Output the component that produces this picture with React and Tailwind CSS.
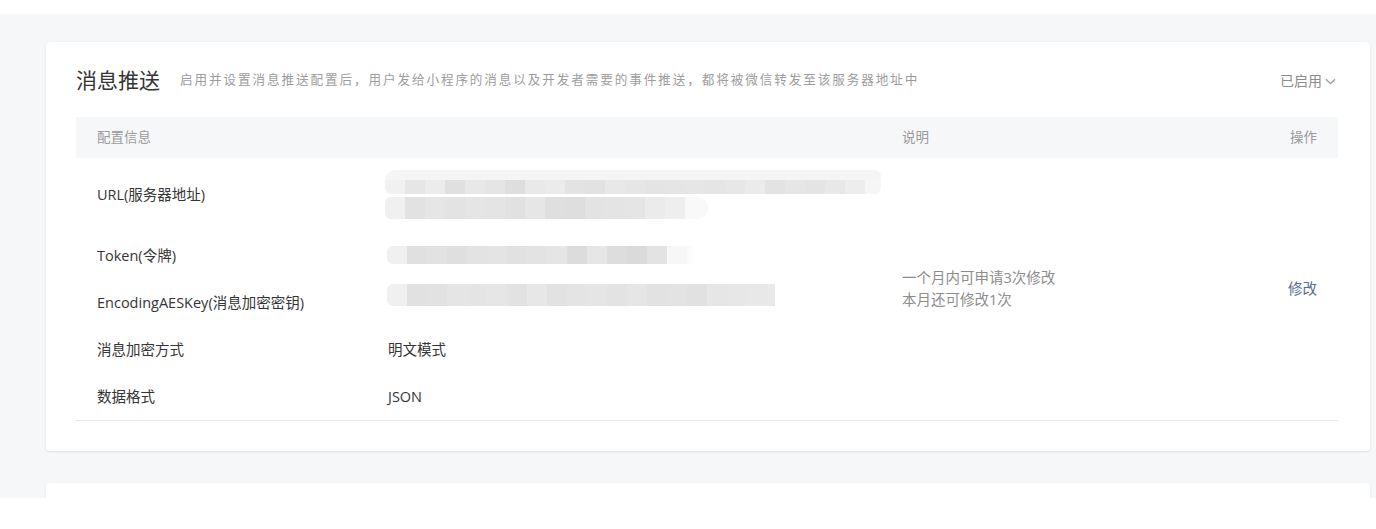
import React from "react";

const FONT = { fontFamily: '"Open Sans", "Noto Sans CJK SC", sans-serif' };

function Cells({ cells }) {
  return cells.map((c, i) => <div key={i} className={`w-[20px] h-full ${c}`} />);
}

const l1 = [
  "bg-[#e6e6e6]", "bg-[#ececec]", "bg-[#e0e0e0]", "bg-[#e8e8e8]", "bg-[#e5e5e5]", "bg-[#dedede]",
  "bg-[#e9e9e9]", "bg-[#ebebeb]", "bg-[#e3e3e3]", "bg-[#e2e2e2]", "bg-[#e8e8e8]", "bg-[#e6e6e6]",
  "bg-[#e4e4e4]", "bg-[#e5e5e5]", "bg-[#e6e6e6]", "bg-[#e5e5e5]", "bg-[#e7e7e7]", "bg-[#ebebeb]",
  "bg-[#e3e3e3]", "bg-[#e6e6e6]", "bg-[#e4e4e4]", "bg-[#e8e8e8]", "bg-[#ededed]",
];
const l2 = [
  "bg-[#e2e2e2]", "bg-[#e6e6e6]", "bg-[#e3e3e3]", "bg-[#e5e5e5]", "bg-[#e4e4e4]", "bg-[#e1e1e1]",
  "bg-[#e6e6e6]", "bg-[#dfdfdf]", "bg-[#dedede]", "bg-[#e3e3e3]", "bg-[#e4e4e4]", "bg-[#e5e5e5]",
  "bg-[#ebebeb]", "bg-[#eeeeee]",
];
const tk = [
  "bg-[#e0e0e0]", "bg-[#e2e2e2]", "bg-[#dfdfdf]", "bg-[#e3e3e3]", "bg-[#e4e4e4]", "bg-[#e1e1e1]",
  "bg-[#e3e3e3]", "bg-[#e5e5e5]", "bg-[#dcdcdc]", "bg-[#e6e6e6]", "bg-[#dddddd]", "bg-[#dadada]",
  "bg-[#e3e3e3]", "bg-[#f7f7f7]",
];
const ak = [
  "bg-[#e1e1e1]", "bg-[#e2e2e2]", "bg-[#e5e5e5]", "bg-[#e4e4e4]", "bg-[#e6e6e6]", "bg-[#e2e2e2]",
  "bg-[#e7e7e7]", "bg-[#e2e2e2]", "bg-[#e4e4e4]", "bg-[#e5e5e5]", "bg-[#e3e3e3]", "bg-[#e6e6e6]",
  "bg-[#e2e2e2]", "bg-[#e3e3e3]", "bg-[#e1e1e1]", "bg-[#e6e6e6]", "bg-[#e7e7e7]", "bg-[#e8e8e8]",
];

function UrlMosaic() {
  return (
    <div className="flex flex-col gap-[3px]">
      <div className="flex flex-col w-[496px] h-[24px]">
        <div className="h-[10px] bg-[#f5f5f5] rounded-tl-[10px] rounded-tr-[6px]" />
        <div className="flex h-[14px]">
          <div className="w-[20px] h-full bg-[#f1f1f1] rounded-bl-[6px]" />
          <Cells cells={l1} />
          <div className="w-[16px] h-full bg-[#f6f6f6] rounded-br-[6px]" />
        </div>
      </div>
      <div className="flex h-[22px]">
        <div className="w-[20px] h-full bg-[#f0f0f0] rounded-l-[6px]" />
        <Cells cells={l2} />
        <div className="w-[23px] h-full bg-[#f9f9f9] rounded-r-[10px]" />
      </div>
    </div>
  );
}

function Strip({ cells, h, tail }) {
  return (
    <div className={`flex ${h}`}>
      <div className="w-[20px] h-full bg-[#f0f0f0] rounded-l-[6px]" />
      <Cells cells={cells} />
      {tail}
    </div>
  );
}

function Chevron() {
  return (
    <svg width="11" height="7" viewBox="0 0 11 7" className="ml-[3px] mt-[2px]">
      <path d="M1 1.2 L5.5 5.6 L10 1.2" fill="none" stroke="#9a9a9a" strokeWidth="1.3" />
    </svg>
  );
}

export default function App() {
  return (
    <div className="bg-white w-[1376px] h-[529px]" style={FONT}>
      <div className="h-[14px]" />
      <div className="h-[484px] overflow-hidden bg-[#f6f7f9] pl-[46px] pr-[6px] pt-[28px] flex flex-col gap-[32px]">
        <div className="bg-white rounded-[4px] shadow-[0_1px_3px_0_rgba(0,0,0,0.09)] pl-[30px] pr-[32px] pt-[24px] pb-[30px]">
          <div className="flex items-center h-[28px]">
            <span className="text-[21px] text-[#353535] leading-[28px]">消息推送</span>
            <span className="ml-[20px] text-[12.6px] tracking-[1.9px] text-[#9d9d9d]">
              启用并设置消息推送配置后，用户发给小程序的消息以及开发者需要的事件推送，都将被微信转发至该服务器地址中
            </span>
            <div className="ml-auto mr-[2px] flex items-center text-[14px] text-[#8c8c8c]">
              已启用
              <Chevron />
            </div>
          </div>

          <div className="mt-[23px] border-b border-[#e7e7eb] text-[14.5px]">
            <div className="flex items-center h-[41px] bg-[#f6f7f9] text-[#9a9a9a] text-[13.5px]">
              <div className="w-[291px] pl-[21px]">配置信息</div>
              <div className="w-[514px] pl-[21px]" />
              <div className="flex-1 pl-[21px]">说明</div>
              <div className="pr-[21px]">操作</div>
            </div>
            <div className="flex">
              <div className="w-[805px] flex flex-col text-[#353535]">
                <div className="flex items-center h-[74px]">
                  <div className="w-[291px] pl-[21px]">URL(服务器地址)</div>
                  <div className="pl-[20px] mt-[-2px]">
                    <UrlMosaic />
                  </div>
                </div>
                <div className="flex items-center h-[47px]">
                  <div className="w-[291px] pl-[21px]">Token(令牌)</div>
                  <div className="pl-[20px] mt-[-2px]">
                    <Strip
                      cells={tk}
                      h="h-[18px]"
                      tail={<div className="w-[5px] h-full bg-[#fbfbfb]" />}
                    />
                  </div>
                </div>
                <div className="flex items-center h-[47px]">
                  <div className="w-[291px] pl-[21px]">EncodingAESKey(消息加密密钥)</div>
                  <div className="pl-[20px] mb-[16px]">
                    <Strip cells={ak} h="h-[22px]" tail={<div className="w-[8px] h-full bg-[#e9e9e9]" />} />
                  </div>
                </div>
                <div className="flex items-center h-[47px]">
                  <div className="w-[291px] pl-[21px]">消息加密方式</div>
                  <div className="pl-[21px]">明文模式</div>
                </div>
                <div className="flex items-center h-[47px]">
                  <div className="w-[291px] pl-[21px]">数据格式</div>
                  <div className="pl-[21px]">JSON</div>
                </div>
              </div>
              <div className="flex-1 flex items-center pl-[21px] text-[#8d8d8d] leading-[22px]">
                <div>
                  <div>一个月内可申请3次修改</div>
                  <div>本月还可修改1次</div>
                </div>
              </div>
              <div className="flex items-center pr-[21px] text-[#576b95]">修改</div>
            </div>
          </div>
        </div>
        <div className="bg-white rounded-[4px] shadow-[0_1px_3px_0_rgba(0,0,0,0.09)] h-[200px] shrink-0" />
      </div>
    </div>
  );
}
